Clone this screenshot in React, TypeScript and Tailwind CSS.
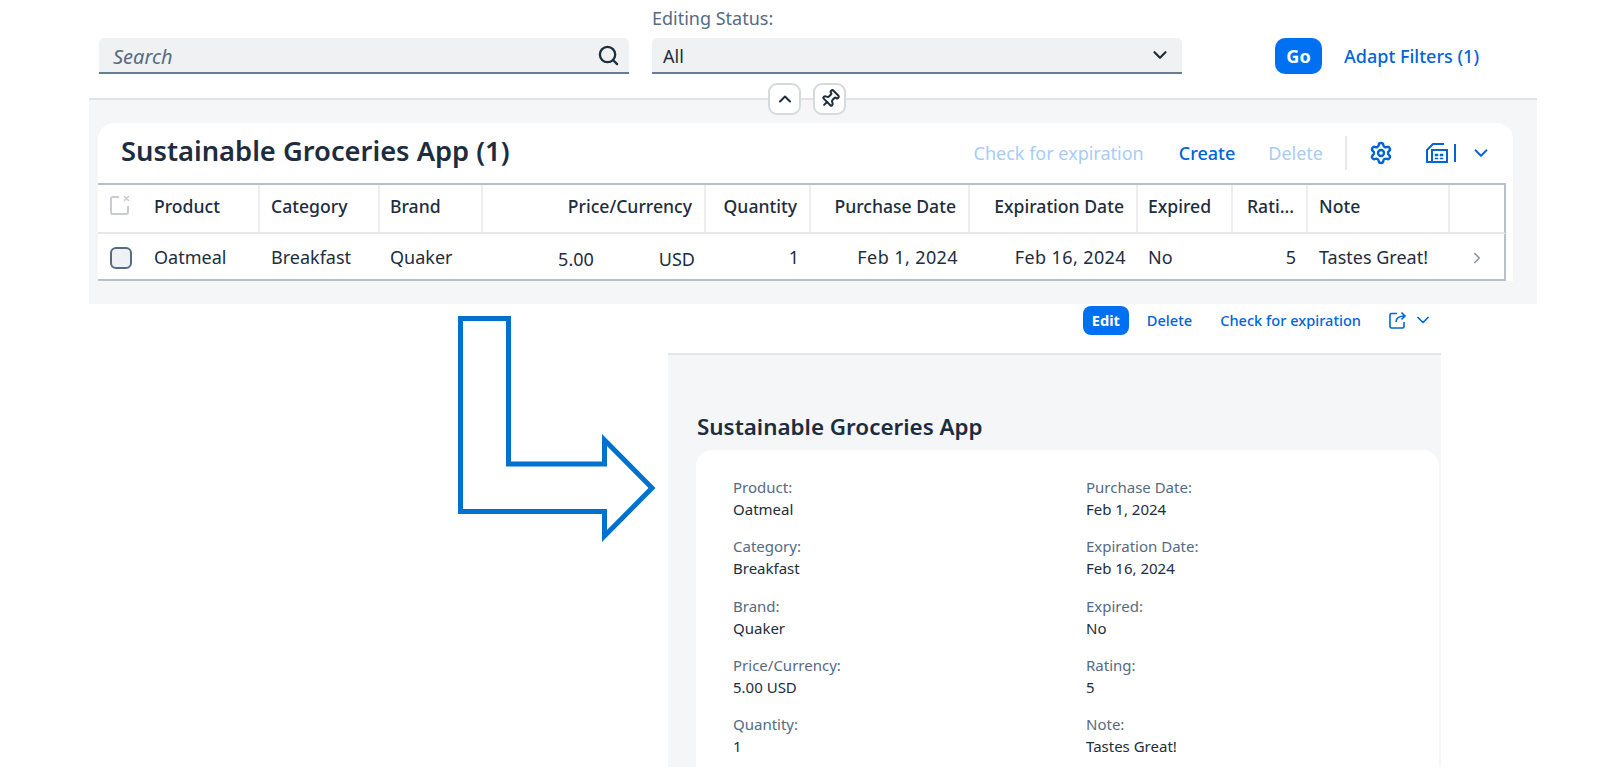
import { ChevronDown, ChevronRight, ChevronUp, Pin, Search, Settings } from "lucide-react";

const colClasses = [
  "pl-[56px] text-left",
  "pl-[11px] text-left",
  "pl-[10px] text-left",
  "pr-[12px] text-right",
  "pr-[12px] text-right",
  "pr-[12px] text-right",
  "pr-[12px] text-right",
  "pl-[10px] text-left",
  "pr-[12px] text-right",
  "pl-[11px] text-left",
  "",
];

const headers = ["Product", "Category", "Brand", "Price/Currency", "Quantity", "Purchase Date", "Expiration Date", "Expired", "Rati...", "Note", ""];

const gridCols = "grid grid-cols-[162px_120px_103px_223px_105px_159px_168px_95px_75px_142px_54px]";

const leftFields = [
  ["Product:", "Oatmeal"],
  ["Category:", "Breakfast"],
  ["Brand:", "Quaker"],
  ["Price/Currency:", "5.00 USD"],
  ["Quantity:", "1"],
];

const rightFields = [
  ["Purchase Date:", "Feb 1, 2024"],
  ["Expiration Date:", "Feb 16, 2024"],
  ["Expired:", "No"],
  ["Rating:", "5"],
  ["Note:", "Tastes Great!"],
];

function FieldColumn({ fields, className }: { fields: string[][]; className: string }) {
  return (
    <div className={`flex flex-col gap-[15.3px] ${className}`}>
      {fields.map(([label, value]) => (
        <div key={label} className="text-[15px] leading-[22px]">
          <div className="text-[#556b82]">{label}</div>
          <div className="text-[#1d2d3e]">{value}</div>
        </div>
      ))}
    </div>
  );
}

function TableExportIcon() {
  return (
    <svg width="24" height="24" viewBox="0 0 24 24" fill="none" stroke="#0064d9" strokeWidth="2">
      <path d="M20 3H9L3 9v12h4" strokeLinejoin="round" />
      <path d="M8 9h15v12H8z" fill="#fff" />
      <path d="M11 13h3v2h-3zM16 13h3v2h-3zM11 17h3v1h-3zM16 17h3v1h-3z" fill="#0064d9" strokeWidth="0.5" />
    </svg>
  );
}

function ShareIcon() {
  return (
    <svg width="20" height="20" viewBox="0 0 20 20" fill="none" stroke="#0064d9" strokeWidth="1.6">
      <path d="M9 3.5H3.5a1.5 1.5 0 0 0-1.5 1.5v11.5A1.5 1.5 0 0 0 3.5 18h11a1.5 1.5 0 0 0 1.5-1.5V12" />
      <path d="M8 12c0-4 3-6 9-6M13.5 2.5 17 6l-3.5 3.5" />
    </svg>
  );
}

export default function App() {
  return (
    <div className="h-[777px] w-[1600px] overflow-hidden bg-white font-['Noto_Sans',sans-serif]">
      {/* FILTER BAR */}
      <div className="relative ml-[89px] w-[1448px] border-b-2 border-[#e0e2e4] h-[100px]">
        <div className="flex items-end pl-[10px] pt-[5px]">
          <div className="mr-[23px] mt-[33px] flex h-[36px] w-[530px] items-center justify-between rounded-t-[5px] border-b-2 border-[#6a7d90] bg-[#eff1f2] pl-[14px] pr-[9px]">
            <span className="pt-[4px] text-[20px] italic text-[#556b82]">Search</span>
            <Search size={23} strokeWidth={2.4} className="text-[#1d2d3e]" />
          </div>
          <div className="w-[530px]">
            <div className="mb-[7px] text-[18px] leading-[26px] text-[#556b82]">Editing Status:</div>
            <div className="flex h-[36px] items-center justify-between rounded-t-[5px] border-b-2 border-[#6a7d90] bg-[#eff1f2] pl-[11px] pr-[11px]">
              <span className="pt-[2px] text-[18px] text-[#1d2d3e]">All</span>
              <ChevronDown size={22} strokeWidth={2.4} className="text-[#1d2d3e]" />
            </div>
          </div>
          <button className="ml-[93px] h-[36px] w-[47px] rounded-[10px] bg-[#0070f2] text-[18px] font-bold text-white">Go</button>
          <span className="ml-[22px] flex h-[36px] items-center text-[18px] font-medium text-[#0064d9]">Adapt Filters (1)</span>
        </div>
        <div className="absolute left-[679px] top-[83px] flex gap-[12px]">
          <button className="flex h-[32px] w-[33px] items-center justify-center rounded-[9px] border-2 border-[#d5dadd] bg-white">
            <ChevronUp size={20} strokeWidth={2.4} className="text-[#1d2d3e]" />
          </button>
          <button className="flex h-[32px] w-[33px] items-center justify-center rounded-[9px] border-2 border-[#d5dadd] bg-white">
            <Pin size={20} strokeWidth={2.4} className="rotate-45 text-[#1d2d3e]" />
          </button>
        </div>
      </div>

      {/* LIST REPORT */}
      <div className="ml-[89px] h-[204px] w-[1448px] bg-[#f5f6f7] pl-[9px] pr-[24px] pt-[23px]">
        <div className="flex h-[60px] items-center justify-between rounded-t-[16px] bg-white pl-[23px] pr-[21px]">
          <h1 className="pb-[4px] text-[27.3px] font-semibold text-[#1d2d3e]">Sustainable Groceries App (1)</h1>
          <div className="flex items-center text-[18px]">
            <span className="text-[#a6cdf8]">Check for expiration</span>
            <span className="ml-[35px] font-medium text-[#0064d9]">Create</span>
            <span className="ml-[33px] text-[#a6cdf8]">Delete</span>
            <span className="ml-[22px] h-[34px] w-[2px] bg-[#e5e7e9]" />
            <Settings size={24} strokeWidth={2.4} className="ml-[22px] text-[#0064d9]" />
            <span className="ml-[31px]"><TableExportIcon /></span>
            <span className="ml-[6px] h-[18px] w-[2px] bg-[#0064d9]" />
            <ChevronDown size={22} strokeWidth={2} className="ml-[14px] text-[#0064d9]" />
          </div>
        </div>
        <div className="bg-white">
          <div className="relative w-[1408px] border-r-2 border-b-2 border-t-2 border-[#b8c0c8] border-b-[#e5e7e9]">
            <div className={`${gridCols} h-[47px]`}>
              {headers.map((h, i) => (
                <div key={i} className={`flex h-full items-center border-r-2 border-[#eceef0] pb-[5px] text-[17.6px] font-medium text-[#1d2d3e] last:border-r-0 ${colClasses[i]} ${i === 3 || i === 4 || i === 5 || i === 6 || i === 8 ? "justify-end" : ""}`}>
                  {h}
                </div>
              ))}
            </div>
            <div className="absolute left-[11px] top-[9px]">
              <svg width="22" height="22" viewBox="0 0 22 22" fill="none" stroke="#c6ccd2" strokeWidth="2">
                <path d="M10 3H4a2 2 0 0 0-2 2v13a2 2 0 0 0 2 2h13a2 2 0 0 0 2-2v-6" />
                <path d="M15 2l5 5M20 2l-5 5" strokeWidth="1.4" />
              </svg>
            </div>
          </div>
          <div className={`${gridCols} h-[47px] w-[1408px] items-center border-r-2 border-b-2 border-[#b8c0c8] pt-[2px] text-[18px] text-[#1d2d3e]`}>
            <div className="flex items-center pl-[12px]">
              <span className="h-[22px] w-[22px] rounded-[6px] border-2 border-[#556b82] bg-[#eff1f2]" />
              <span className="ml-[22px]">Oatmeal</span>
            </div>
            <div className={colClasses[1]}>Breakfast</div>
            <div className={colClasses[2]}>Quaker</div>
            <div className="flex justify-end gap-[65px] pr-[11px] pt-[3px]"><span>5.00</span><span>USD</span></div>
            <div className={colClasses[4]}>1</div>
            <div className={`tracking-[0.4px] ${colClasses[5]}`}>Feb 1, 2024</div>
            <div className={`tracking-[0.4px] ${colClasses[6]}`}>Feb 16, 2024</div>
            <div className={colClasses[7]}>No</div>
            <div className={colClasses[8]}>5</div>
            <div className={colClasses[9]}>Tastes Great!</div>
            <div className="flex justify-center"><ChevronRight size={18} className="text-[#8396a8]" /></div>
          </div>
        </div>
      </div>

      {/* OBJECT PAGE */}
      <div className="flex items-start pl-[456px]">
        <svg width="200" height="240" viewBox="0 0 200 240" className="mt-[10px] shrink-0" fill="none" stroke="#0072ce" strokeWidth="5">
          <path d="M4.5 4.5H52.5V150H148.5V126L196 174L148.5 222V197.5H4.5Z" />
        </svg>
        <div className="ml-[12px] h-[463px] w-[773px] shrink-0">
          <div className="flex h-[49px] items-start justify-end text-[14.6px]">
            <button className="mt-[2px] h-[29px] w-[46px] rounded-[8px] bg-[#0070f2] font-bold text-white">Edit</button>
            <span className="ml-[18px] mt-[6px] font-medium text-[#0064d9]">Delete</span>
            <span className="ml-[28px] mt-[6px] font-medium text-[#0064d9]">Check for expiration</span>
            <span className="ml-[27px] mt-[6px]"><ShareIcon /></span>
            <ChevronDown size={20} strokeWidth={2} className="ml-[5px] mr-[8px] mt-[6px] text-[#0064d9]" />
          </div>
          <div className="h-[414px] overflow-hidden border-t-2 border-[#e3e5e7] bg-[#f5f6f7] pl-[28px] pr-[2px]">
            <h2 className="pb-[8px] pl-[1px] pt-[57px] text-[22.4px] font-semibold leading-[30px] text-[#1d2d3e]">Sustainable Groceries App</h2>
            <div className="flex h-[400px] rounded-t-[16px] bg-white pt-[26px]">
              <FieldColumn fields={leftFields} className="ml-[37px] w-[353px]" />
              <FieldColumn fields={rightFields} className="" />
            </div>
          </div>
        </div>
      </div>
    </div>
  );
}
